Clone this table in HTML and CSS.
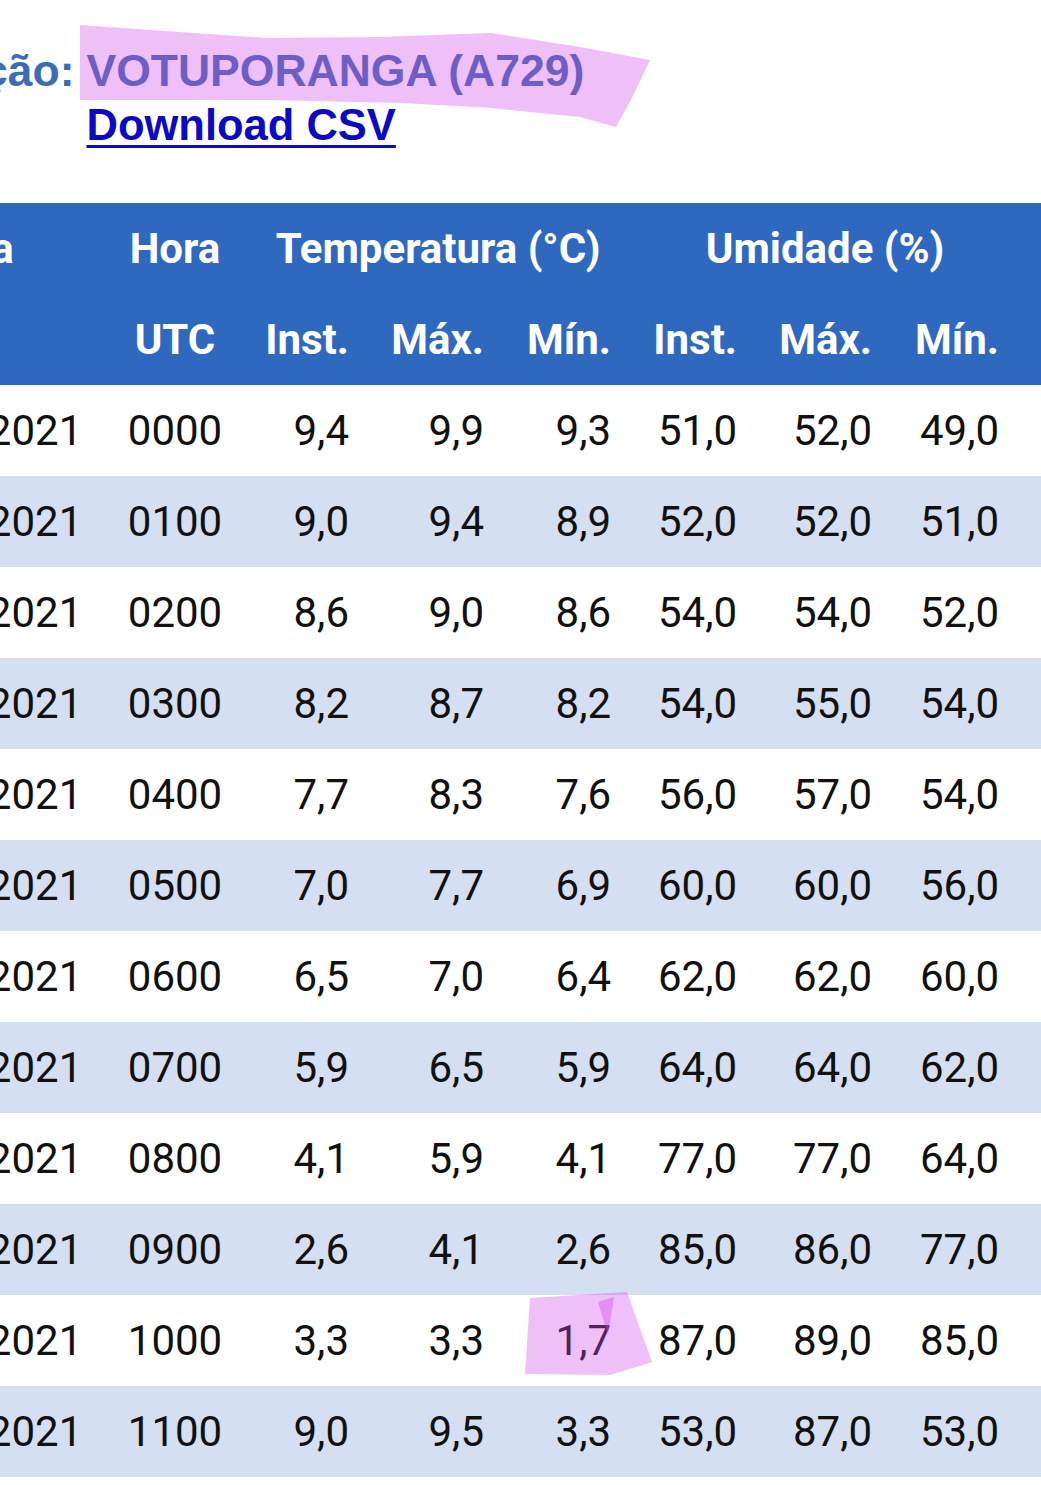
FILE: index.html
```html
<!DOCTYPE html>
<html lang="pt-BR">
<head>
<meta charset="utf-8">
<title>Dados da Estação</title>
<link rel="stylesheet" href="styles.css">
</head>
<body>
<div class="page">
  <div class="station">
    <div class="station-label">Estação:</div>
    <div class="station-value">
      <div class="station-name">VOTUPORANGA (A729)</div>
      <a class="csv-link" href="#">Download CSV</a>
    </div>
  </div>

  <table class="data">
    <colgroup>
      <col class="c-date"><col class="c-hour"><col class="c-t1"><col class="c-t2"><col class="c-t3"><col class="c-u1"><col class="c-u2"><col class="c-u3"><col class="c-rest">
    </colgroup>
    <thead>
      <tr>
        <th class="ctr">Data</th>
        <th class="ctr">Hora</th>
        <th class="ctr" colspan="3">Temperatura (°C)</th>
        <th class="ctr" colspan="3">Umidade (%)</th>
        <th></th>
      </tr>
      <tr>
        <th></th>
        <th class="ctr">UTC</th>
        <th>Inst.</th><th>Máx.</th><th>Mín.</th>
        <th>Inst.</th><th>Máx.</th><th>Mín.</th>
        <th></th>
      </tr>
    </thead>
    <tbody>
      <tr><td class="ctr">01/06/2021</td><td class="ctr">0000</td><td>9,4</td><td>9,9</td><td>9,3</td><td>51,0</td><td>52,0</td><td>49,0</td><td></td></tr>
      <tr><td class="ctr">01/06/2021</td><td class="ctr">0100</td><td>9,0</td><td>9,4</td><td>8,9</td><td>52,0</td><td>52,0</td><td>51,0</td><td></td></tr>
      <tr><td class="ctr">01/06/2021</td><td class="ctr">0200</td><td>8,6</td><td>9,0</td><td>8,6</td><td>54,0</td><td>54,0</td><td>52,0</td><td></td></tr>
      <tr><td class="ctr">01/06/2021</td><td class="ctr">0300</td><td>8,2</td><td>8,7</td><td>8,2</td><td>54,0</td><td>55,0</td><td>54,0</td><td></td></tr>
      <tr><td class="ctr">01/06/2021</td><td class="ctr">0400</td><td>7,7</td><td>8,3</td><td>7,6</td><td>56,0</td><td>57,0</td><td>54,0</td><td></td></tr>
      <tr><td class="ctr">01/06/2021</td><td class="ctr">0500</td><td>7,0</td><td>7,7</td><td>6,9</td><td>60,0</td><td>60,0</td><td>56,0</td><td></td></tr>
      <tr><td class="ctr">01/06/2021</td><td class="ctr">0600</td><td>6,5</td><td>7,0</td><td>6,4</td><td>62,0</td><td>62,0</td><td>60,0</td><td></td></tr>
      <tr><td class="ctr">01/06/2021</td><td class="ctr">0700</td><td>5,9</td><td>6,5</td><td>5,9</td><td>64,0</td><td>64,0</td><td>62,0</td><td></td></tr>
      <tr><td class="ctr">01/06/2021</td><td class="ctr">0800</td><td>4,1</td><td>5,9</td><td>4,1</td><td>77,0</td><td>77,0</td><td>64,0</td><td></td></tr>
      <tr><td class="ctr">01/06/2021</td><td class="ctr">0900</td><td>2,6</td><td>4,1</td><td>2,6</td><td>85,0</td><td>86,0</td><td>77,0</td><td></td></tr>
      <tr><td class="ctr">01/06/2021</td><td class="ctr">1000</td><td>3,3</td><td>3,3</td><td>1,7</td><td>87,0</td><td>89,0</td><td>85,0</td><td></td></tr>
      <tr><td class="ctr">01/06/2021</td><td class="ctr">1100</td><td>9,0</td><td>9,5</td><td>3,3</td><td>53,0</td><td>87,0</td><td>53,0</td><td></td></tr>
    </tbody>
  </table>
</div>

<svg class="marker" width="1041" height="1485" viewBox="0 0 1041 1485" aria-hidden="true">
  <polygon class="ink" points="80,25 179,32 268,38 379,37 491,33 580,47 650,60 632,98 616,127 580,117 491,108 402,103 268,100 156,100 80,100"/>
  <polygon class="ink" points="530,1298 627,1292 652,1362 610,1375 525,1374"/>
  <polygon class="ink fold" points="598,1302 614,1297 608,1335"/>
</svg>
</body>
</html>
```

FILE: styles.css
```css
html, body {
  margin: 0;
  padding: 0;
  background: #ffffff;
}

body {
  position: relative;
  overflow: hidden;
  width: 1041px;
  height: 1485px;
  font-family: Roboto, "Liberation Sans", sans-serif;
}

.page {
  margin-left: -164px;
  padding-top: 44px;
}

.station {
  display: flex;
  align-items: flex-start;
  gap: 12px;
  padding-left: 53px;
  font-family: "Liberation Sans", Arial, sans-serif;
  font-weight: bold;
  font-size: 44.5px;
  line-height: 54px;
  color: #3a6db4;
}

.station-value {
  display: flex;
  flex-direction: column;
  align-items: flex-start;
}

.csv-link {
  color: #0b0bc4;
  font-size: 43.5px;
  text-decoration: underline;
  text-decoration-thickness: 3px;
  text-underline-offset: 5px;
}

.data {
  margin-top: 51px;
  border-collapse: collapse;
  table-layout: fixed;
  width: 1264px;
}

.c-date { width: 269px; }
.c-hour { width: 140px; }
.c-t1 { width: 124px; }
.c-t2 { width: 135px; }
.c-t3 { width: 127px; }
.c-u1 { width: 126px; }
.c-u2 { width: 135px; }
.c-u3 { width: 127px; }
.c-rest { width: 81px; }

.data th,
.data td {
  padding: 0 20px 0 0;
  height: 91px;
  text-align: right;
  white-space: nowrap;
  overflow: visible;
}

.data .ctr {
  text-align: center;
  padding: 0;
}

.data thead tr {
  background: #2f69bf;
}

.data th {
  color: #ffffff;
  font-weight: bold;
  font-size: 42px;
}

.data td {
  color: #111111;
  font-size: 42px;
  font-weight: normal;
}

.data tbody tr:nth-child(even) {
  background: #d4dff1;
}

.marker {
  position: absolute;
  top: 0;
  left: 0;
  pointer-events: none;
}

.marker .ink {
  fill: rgba(208, 67, 234, 0.34);
}

.marker .fold {
  fill: rgba(208, 67, 234, 0.38);
}
```
